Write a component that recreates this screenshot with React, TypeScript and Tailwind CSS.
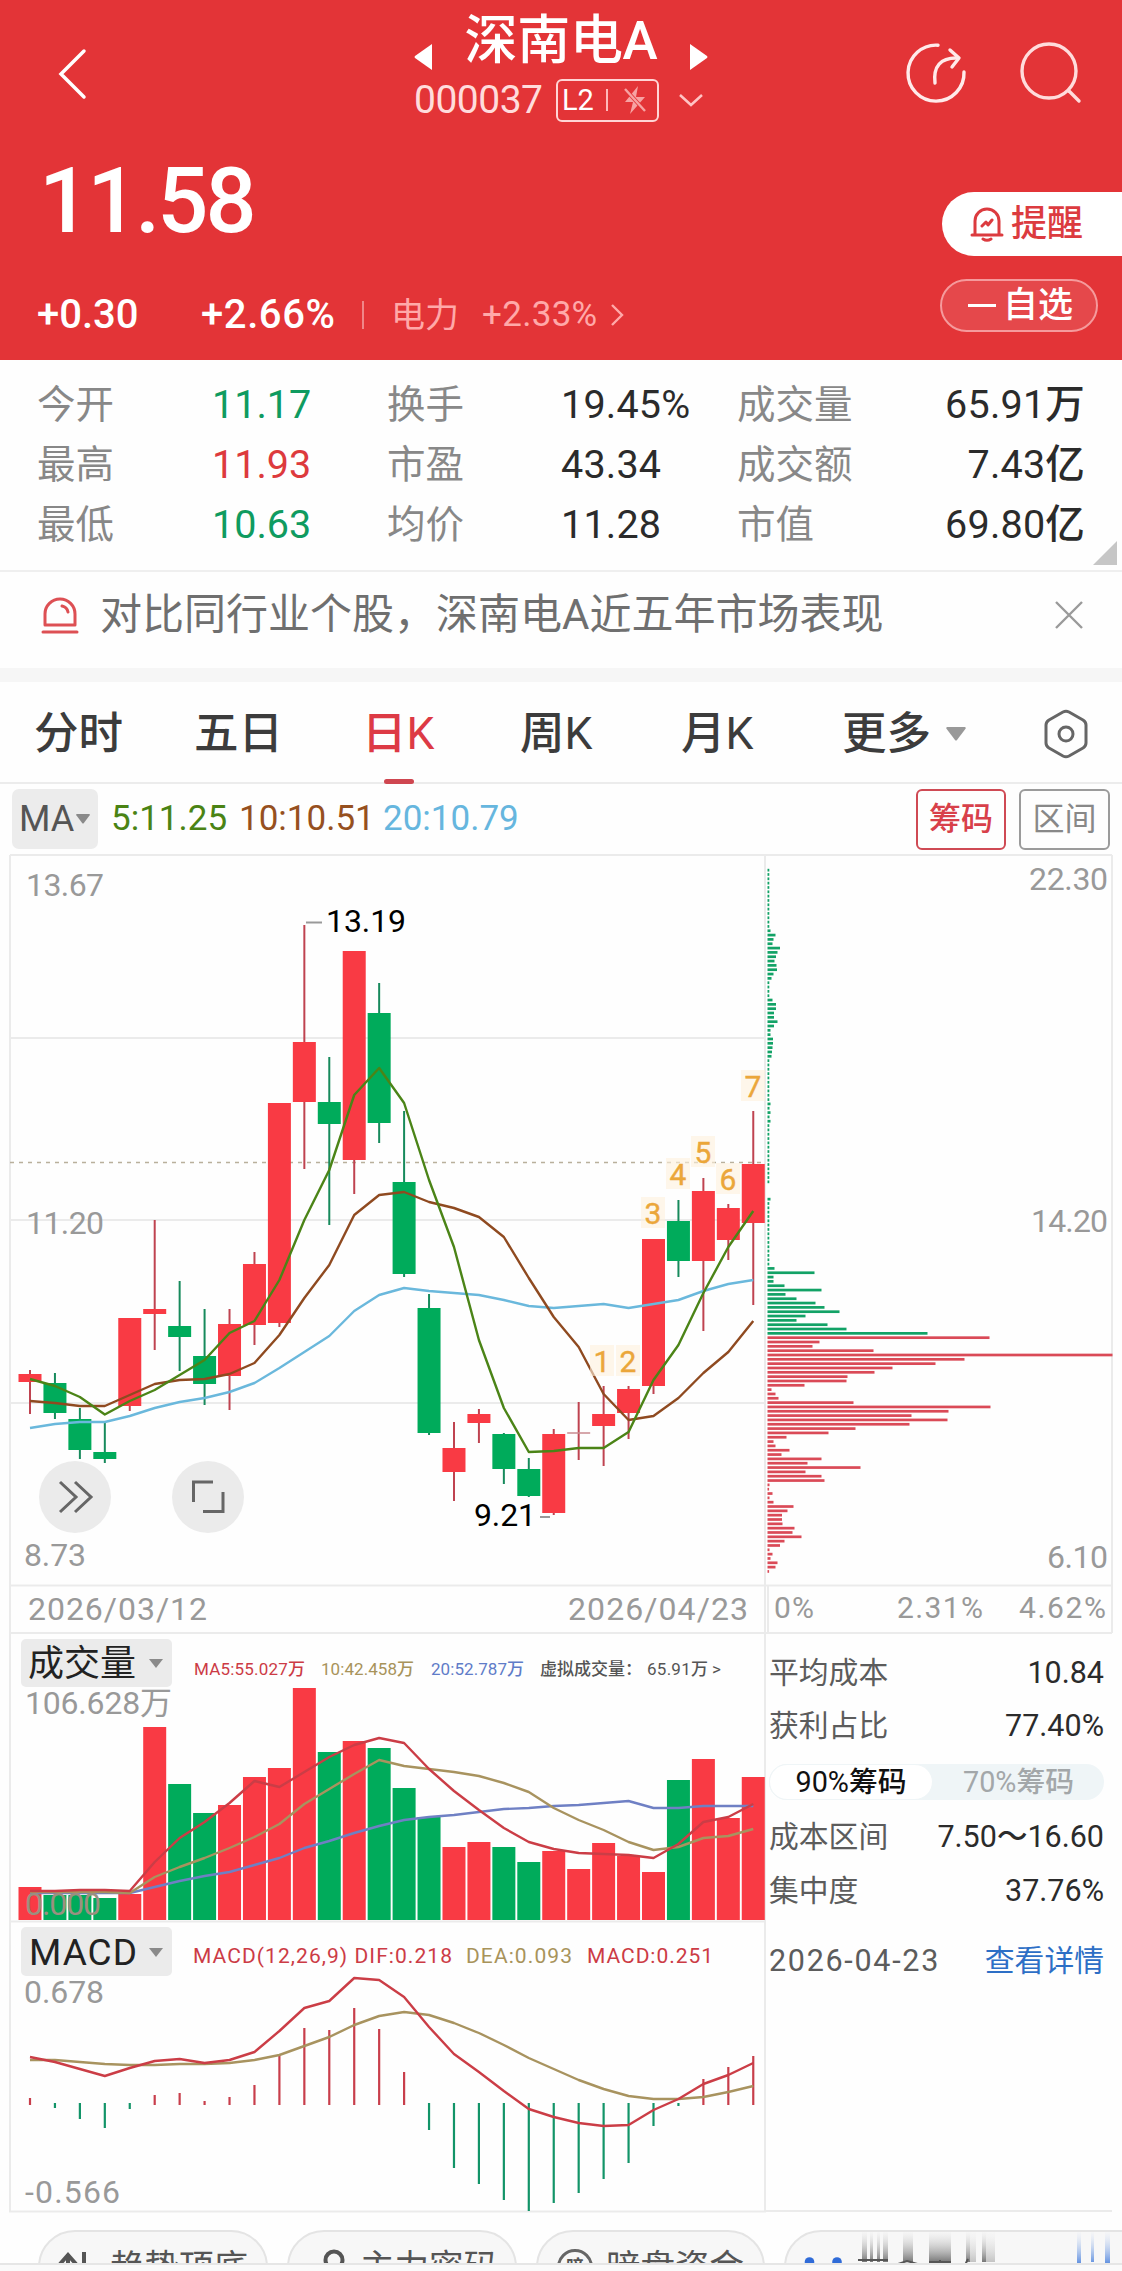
import React from "react";

const RED = "#f93a44";
const GREEN = "#00ab5b";
const STEP = 24.94;
const X0 = 30;
const cx = (i: number) => X0 + i * STEP;

// [kind, bodyTop, bodyBottom, wickTop, wickBottom]
const CANDLES: [string, number, number, number, number][] = [
  ["r", 1374, 1382, 1370, 1414],
  ["g", 1383, 1413, 1373, 1419],
  ["g", 1419, 1450, 1408, 1459],
  ["g", 1452, 1459, 1423, 1463],
  ["r", 1318, 1406, 1318, 1411],
  ["r", 1309, 1314, 1220, 1350],
  ["g", 1326, 1337, 1281, 1371],
  ["g", 1356, 1384, 1309, 1405],
  ["r", 1324, 1376, 1309, 1410],
  ["r", 1264, 1325, 1252, 1345],
  ["r", 1103, 1323, 1103, 1327],
  ["r", 1042, 1102, 925, 1169],
  ["g", 1102, 1124, 1057, 1225],
  ["r", 951, 1160, 951, 1194],
  ["g", 1013, 1123, 983, 1143],
  ["g", 1182, 1274, 1111, 1277],
  ["g", 1308, 1433, 1294, 1435],
  ["r", 1448, 1472, 1422, 1501],
  ["r", 1414, 1423, 1409, 1443],
  ["g", 1434, 1469, 1433, 1484],
  ["g", 1469, 1496, 1458, 1497],
  ["r", 1434, 1513, 1429, 1515],
  ["d", 1433, 1434, 1402, 1460],
  ["r", 1414, 1426, 1386, 1466],
  ["r", 1389, 1413, 1386, 1439],
  ["r", 1239, 1386, 1239, 1394],
  ["g", 1221, 1261, 1200, 1277],
  ["r", 1191, 1261, 1178, 1331],
  ["r", 1208, 1240, 1204, 1260],
  ["r", 1164, 1223, 1111, 1305],
];

const MA5 = [1379, 1386, 1397, 1414.5, 1401, 1390, 1375, 1360, 1333, 1321, 1280, 1220, 1170, 1095, 1068, 1103, 1180, 1247, 1340, 1408, 1452, 1451, 1448, 1448, 1432, 1380, 1345, 1293, 1247, 1211];
const MA10 = [1401, 1403, 1406, 1406, 1395, 1384, 1380, 1379, 1374, 1363, 1335, 1298, 1265, 1215, 1195, 1192, 1202, 1208, 1217, 1237, 1278, 1317, 1347, 1394, 1420, 1416, 1398, 1373, 1352, 1321];
const MA20 = [1428, 1424, 1422, 1422, 1416, 1408, 1402, 1398, 1392, 1383, 1368, 1352, 1336, 1311, 1295, 1288, 1291, 1293, 1295, 1300, 1306, 1308, 1306, 1304, 1308, 1304, 1300, 1291, 1284, 1280];

const VOLUME = [1887, 1895, 1895, 1898, 1894, 1727, 1784, 1813, 1805, 1777, 1768, 1688, 1752, 1741, 1748, 1788, 1817, 1847, 1842, 1847, 1862, 1851, 1869, 1843, 1856, 1872, 1780, 1759, 1818, 1777];
const V5 = [1891, 1891, 1890, 1890, 1891, 1862, 1838, 1822, 1803, 1781, 1787, 1772, 1757, 1745, 1738, 1743, 1769, 1791, 1810, 1828, 1842, 1849, 1853, 1854, 1855, 1858, 1844, 1822, 1817, 1804];
const V10 = [1892, 1892, 1892, 1892, 1893, 1877, 1867, 1858, 1848, 1837, 1824, 1804, 1789, 1774, 1760, 1766, 1769, 1772, 1776, 1783, 1792, 1808, 1820, 1830, 1842, 1850, 1847, 1838, 1836, 1829];
const V20 = [1893, 1893, 1893, 1893, 1893, 1887, 1881, 1876, 1872, 1865, 1858, 1848, 1841, 1833, 1826, 1820, 1817, 1815, 1812, 1809, 1808, 1806, 1805, 1803, 1801, 1808, 1808, 1806, 1806, 1806];

const MACD = [2098, 2108, 2119, 2128, 2109, 2095, 2093, 2101, 2097, 2085, 2054, 2028, 2030, 2008, 2029, 2072, 2130, 2168, 2184, 2200, 2211, 2203, 2193, 2179, 2163, 2126, 2106, 2079, 2067, 2056];
const DIF = [2057, 2062, 2069, 2076, 2068, 2061, 2059, 2063, 2060, 2052, 2031, 2008, 2001, 1978, 1980, 1997, 2027, 2054, 2072, 2091, 2109, 2117, 2123, 2126, 2125, 2110, 2099, 2084, 2075, 2063];
const DEA = [2060, 2060, 2062, 2064, 2065, 2065, 2064, 2064, 2063, 2060, 2055, 2046, 2037, 2025, 2016, 2012, 2015, 2023, 2033, 2045, 2058, 2069, 2080, 2089, 2096, 2099, 2099, 2097, 2092, 2086];

const tiny = (n: number) => Array<number>(n).fill(1.8);
// bar lengths of the cost distribution, from the highest price down
const CHIPS: number[] = [
  ...tiny(14), 3, 8, 6, 5, 12.5, 10, 8.5, 7, 9, 9.5, 6, 4, ...tiny(4),
  5, 8.5, 8.5, 6.5, 6.5, 10, 6.5, 3, 3, 5.5, 5.5, 5, 4.5, 4,
  ...tiny(10), 3, 2, 3, 2, 3, ...tiny(14), 0, 0, 0, 3, ...tiny(15),
  7, 47, 6, 6, 17, 54, 18, 29, 48, 57, 72, 38, 29, 60, 79, 160,
  222, 52, 45, 106, 345, 197, 168, 125, 107, 80, 79, 37, 4, 8, 11, 86, 223, 181, 144, 180, 142,
  88, 61, 19, 6, 8, 22, 14, 54, 40, 93, 38, 54, 57, 2, 1.6, 5, 2, 6, 26, 20, 14.5, 14.5, 15, 27,
  25, 34, 17, 12.5, 2, 5, 3, 10, 8, 1.6,
];

const MARKS: [string, number, number][] = [
  ["1", 602, 1361], ["2", 628, 1361], ["3", 653, 1213], ["4", 678, 1174],
  ["5", 703, 1152], ["6", 728, 1179], ["7", 753, 1086],
];

const Line = ({ data, color, width = 2.4 }: { data: number[]; color: string; width?: number }) => (
  <polyline
    points={data.map((y, i) => `${cx(i)},${y}`).join(" ")}
    fill="none"
    stroke={color}
    strokeWidth={width}
    strokeLinejoin="round"
  />
);

const Label = ({ x, y, w, size = 32, color = "#999", children }: { x: number; y: number; w: number; size?: number; color?: string; children: string }) => (
  <text x={x} y={y + size * 0.36 - 0.5} fontSize={size} fill={color} textLength={w} lengthAdjust="spacing">
    {children}
  </text>
);

const Caret = ({ className }: { className: string }) => (
  <svg viewBox="0 0 20 14" className={className} fill="currentColor">
    <path d="M1 0h18q1.200 .6.500 1.800L11 13q-1 1.200-2 0L.5 1.800Q-.2.600 1 0z" />
  </svg>
);

function Header() {
  return (
    <header className="h-[360px] bg-[#e33437] text-white">
      <div className="grid h-[136px] grid-cols-[1fr_294px_1fr]">
        <div className="pt-[47px] pl-[57px]">
          <svg viewBox="0 0 30 54" className="h-[54px] w-[30px]" fill="none" stroke="currentColor" strokeWidth="3.500" strokeLinecap="round">
            <path d="M27 4 4 27l23 23" />
          </svg>
        </div>
        <div>
          <div className="flex h-[78px] items-center justify-between">
            <svg viewBox="0 0 18 28" className="mt-[36px] h-[28px] w-[18px]" fill="currentColor">
              <path d="M18 1v26L1 15q-1-1 0-2z" />
            </svg>
            <h1 className="pt-[4px] text-[53px] leading-[78px] font-medium tracking-[-0.300px]">深南电A</h1>
            <svg viewBox="0 0 18 28" className="mt-[36px] h-[28px] w-[18px]" fill="currentColor">
              <path d="M0 1v26l17-12q1-1 0-2z" />
            </svg>
          </div>
          <div className="flex h-[44px] items-center">
            <span className="w-[142px] text-[39px] leading-[44px] tracking-[-0.500px] text-[#ffdcdc]">000037</span>
            <span className="flex h-[43px] w-[103px] items-center rounded-[6px] border-2 border-[#ffd5d5] pl-[4px]">
              <span className="w-[44px] text-[29px] leading-[40px]">L2</span>
              <span className="h-[22px] w-[2px] bg-[#ffb9b9]" />
              <svg viewBox="0 0 24 28" className="ml-[15px] h-[28px] w-[24px] text-[#f7a3a3]" fill="currentColor">
                <path d="M15 0 2 16h8L7 28 22 11h-9z" />
                <path d="M2 3 22 25" stroke="#e33437" strokeWidth="4" />
                <path d="M2 3 22 25" stroke="currentColor" strokeWidth="2.400" />
              </svg>
            </span>
            <svg viewBox="0 0 26 14" className="ml-[19px] h-[14px] w-[26px] text-[#ffc4c4]" fill="none" stroke="currentColor" strokeWidth="2.500">
              <path d="m2 2 11 10L24 2" />
            </svg>
          </div>
        </div>
        <div className="flex justify-end gap-[52px] pt-[41px] pr-[40px]">
          <svg viewBox="0 0 64 64" className="h-[64px] w-[64px]" fill="none" stroke="#ffeaea" strokeWidth="3.400" strokeLinecap="round" strokeLinejoin="round">
            <path d="M34 4.200A28 28 0 1 0 60 31" />
            <path d="M31 42c-2-17 6-25 21-25" />
            <path d="m46 9 9 8-7 9" />
          </svg>
          <svg viewBox="0 0 62 64" className="h-[64px] w-[62px]" fill="none" stroke="#ffdcdc" strokeWidth="3.400" strokeLinecap="round">
            <circle cx="29" cy="30" r="27" />
            <path d="m49 50 10 10" />
          </svg>
        </div>
      </div>
      <div className="flex h-[136px] items-start justify-between pl-[39px]">
        <div className="pt-[11px] text-[90px] leading-[110px] font-medium tracking-[-3px]">11.58</div>
        <button className="mt-[56px] flex h-[64px] w-[180px] items-center rounded-l-full bg-white pl-[28px] text-[#dc3b3f]">
          <svg viewBox="0 0 34 36" className="h-[36px] w-[34px]" fill="none" stroke="currentColor" strokeWidth="3" strokeLinecap="round" strokeLinejoin="round">
            <path d="M2 29h30M5 29V15a12 12 0 0 1 24 0v14M13 33q4 2.500 8 0M12 20l4-4 2 3 4-5" />
          </svg>
          <span className="ml-[7px] text-[36px] leading-[40px] font-medium">提醒</span>
        </button>
      </div>
      <div className="flex h-[88px] items-start justify-between pr-[24px] pl-[37px]">
        <div className="flex pt-[23px] text-[40px] leading-[40px] font-medium">
          <span className="w-[164px]">+0.30</span>
          <span className="w-[161px] tracking-[0.600px]">+2.66%</span>
          <span className="mt-[6px] mr-[27px] h-[28px] w-[2px] bg-[#f08688]" />
          <span className="w-[91px] text-[34px] font-normal text-[#ffa9a9]">电力</span>
          <span className="w-[128px] text-[35px] font-normal tracking-[0.300px] text-[#ffa9a9]">+2.33%</span>
          <svg viewBox="0 0 14 24" className="mt-[8px] h-[24px] w-[14px] text-[#ffa9a9]" fill="none" stroke="currentColor" strokeWidth="2.400">
            <path d="m2 2 10 10L2 22" />
          </svg>
        </div>
        <button className="mt-[7px] flex h-[53px] w-[158px] items-center rounded-full border-2 border-[#f59a9c] bg-[#e5484b] pl-[26px]">
          <span className="h-[3px] w-[28px] bg-white" />
          <span className="ml-[7px] text-[35px] leading-[46px] font-medium">自选</span>
        </button>
      </div>
    </header>
  );
}

const STATS = [
  ["今开", "11.17", "text-[#0f9b60]", "换手", "19.45%", "成交量", "65.91万"],
  ["最高", "11.93", "text-[#dd3a3d]", "市盈", "43.34", "成交额", "7.43亿"],
  ["最低", "10.63", "text-[#0f9b60]", "均价", "11.28", "市值", "69.80亿"],
];

function Stats() {
  return (
    <section className="relative h-[212px] border-b-2 border-[#efefef] pt-[15px] pr-[37px] pl-[37px]">
      {STATS.map((r) => (
        <div key={r[0]} className="grid h-[60px] grid-cols-[175px_175px_174px_176px_1fr_auto] items-center text-[38.500px] leading-[58px] text-[#2b2b2b]">
          <span className="text-[#888]">{r[0]}</span>
          <span className={`text-[39.500px] font-[450] ${r[2]}`}>{r[1]}</span>
          <span className="text-[#888]">{r[3]}</span>
          <span className="text-[39.500px] font-[450] tracking-[0.200px]">{r[4]}</span>
          <span className="text-[#888]">{r[5]}</span>
          <span className="text-[39.500px] font-[450] tracking-[0.200px]">{r[6]}</span>
        </div>
      ))}
      <svg viewBox="0 0 24 24" className="absolute right-[5px] bottom-[5px] h-[24px] w-[24px]" fill="#c6c6c6">
        <path d="M24 0v24H0z" />
      </svg>
    </section>
  );
}

function Banner() {
  return (
    <section className="flex h-[96px] items-center pr-[39px] pb-[11px] pl-[41px]">
      <svg viewBox="0 0 38 40" className="h-[40px] w-[38px]" fill="none" stroke="#dd5054" strokeWidth="3" strokeLinecap="round" strokeLinejoin="round">
        <path d="M4 30V19a15 15 0 0 1 30 0v11zM2 37h34M21 11q5 1 6 6" />
      </svg>
      <span className="ml-[21px] flex-1 text-[42px] leading-[60px] text-[#6f6f6f]">对比同行业个股，深南电A近五年市场表现</span>
      <svg viewBox="0 0 28 28" className="h-[28px] w-[28px]" stroke="#9a9a9a" strokeWidth="2.400">
        <path d="m1 1 26 26M27 1 1 27" />
      </svg>
    </section>
  );
}

function Tabs() {
  return (
    <nav className="relative flex h-[102px] items-center border-b-2 border-[#ececec] pt-[3px] pl-[34px] text-[44.500px] leading-[60px] font-[450] text-[#3c3c3c]">
      <span className="w-[160px]">分时</span>
      <span className="w-[168px]">五日</span>
      <span className="relative w-[158px] text-[#dd3a45]">
        日K
        <span className="absolute bottom-[-20px] left-[22px] h-[5px] w-[30px] rounded-full bg-[#cf4650]" />
      </span>
      <span className="w-[161px]">周K</span>
      <span className="w-[161px]">月K</span>
      <span>更多</span>
      <Caret className="ml-[14px] h-[14px] w-[22px] text-[#999]" />
      <svg viewBox="0 0 46 50" className="ml-[76px] h-[50px] w-[46px]" fill="none" stroke="#666" strokeWidth="3" strokeLinejoin="round">
        <path d="M20 3q3-1.500 6 0l14 8q3 2 3 5v18q0 3-3 5l-14 8q-3 1.500-6 0L6 39q-3-2-3-5V16q0-3 3-5z" />
        <circle cx="23" cy="25" r="7" />
      </svg>
    </nav>
  );
}

function MaBar() {
  return (
    <section className="flex h-[70px] items-center pr-[12px] pl-[12px] text-[35px] leading-[40px] font-[450]">
      <span className="flex h-[60px] w-[86px] items-center rounded-[7px] bg-[#ececec] pl-[7px] text-[36px] font-normal text-[#555]">
        MA
        <Caret className="ml-[2px] h-[10px] w-[14px] text-[#8a8a8a]" />
      </span>
      <span className="ml-[13px] w-[128px] text-[#4a8314]">5:11.25</span>
      <span className="w-[144px] text-[#96501f]">10:10.51</span>
      <span className="flex-1 text-[#66b6de]">20:10.79</span>
      <span className="flex h-[61px] w-[90px] items-center justify-center rounded-[6px] border-2 border-[#cf4a54] text-[32px] text-[#d8404a]">筹码</span>
      <span className="ml-[13px] flex h-[61px] w-[91px] items-center justify-center rounded-[6px] border-2 border-[#9b9b9b] text-[32px] font-normal text-[#888]">区间</span>
    </section>
  );
}

function PriceChart() {
  return (
    <svg viewBox="0 854 1122 780" className="block h-[780px] w-full">
      <g stroke="#ebebeb" strokeWidth="2" fill="none">
        <path d="M10 855H1112M10 1585.500H1112M10 1633H1112M10 1038H765M10 1220H765M10 1403H765M10 855V1634M765 855V1634M1112 855V1633M768 1585V1633" />
      </g>
      <path d="M10 1162.500H765" stroke="#b9b09c" strokeWidth="1.600" strokeDasharray="4 5" />
      <Label x={26} y={885} w={78}>13.67</Label>
      <Label x={26} y={1223} w={78}>11.20</Label>
      <Label x={24} y={1555} w={62}>8.73</Label>
      <Label x={28} y={1609} w={179}>2026/03/12</Label>
      <Label x={568} y={1609} w={180}>2026/04/23</Label>
      {CANDLES.map(([k, t, b, h, l], i) => {
        const wick = k === "g" ? "#178a5c" : "#bf4350";
        return (
          <g key={i}>
            <path d={`M${cx(i)} ${h}V${l}`} stroke={wick} strokeWidth="2" />
            {k === "d" ? (
              <path d={`M${cx(i) - 11.500} ${t}h23`} stroke="#c98a8f" strokeWidth="1.500" />
            ) : (
              <rect x={cx(i) - 11.500} y={t} width="23" height={b - t} fill={k === "g" ? GREEN : RED} />
            )}
          </g>
        );
      })}
      <Line data={MA20} color="#6ab8dc" />
      <Line data={MA10} color="#8f4a20" />
      <Line data={MA5} color="#4b8417" />
      {MARKS.map(([n, x, y]) => (
        <g key={n}>
          <rect x={x - 12} y={y - 16} width="24" height="31" fill="#fdf0dc" fillOpacity="0.600" />
          <text x={x} y={y + 10.5} fontSize="30" textAnchor="middle" fill="#eba63a" stroke="#eba63a" strokeWidth="0.400">{n}</text>
        </g>
      ))}
      <path d="M306 922.500h16M540 1517h10" stroke="#999" strokeWidth="2" />
      <Label x={326} y={921} w={80} color="#000">13.19</Label>
      <Label x={474} y={1515} w={62} color="#000">9.21</Label>
      <circle cx="75" cy="1497" r="36" fill="#ebebeb" />
      <circle cx="208" cy="1497" r="36" fill="#ebebeb" />
      <g fill="none" stroke="#666" strokeWidth="3">
        <path d="m60 1482 16 15-16 15M75 1482l16 15-16 15M193.500 1502v-20H213M203 1511.500h20V1492" />
      </g>
      {CHIPS.map((w, k) =>
        w > 0 ? <rect key={k} x="767.500" y={868.8 + k * 4.329} width={w} height="2.700" fill={k < 108 ? "#12a266" : "#da4a57"} /> : null,
      )}
      <Label x={1029} y={879} w={79}>22.30</Label>
      <Label x={1031} y={1221} w={77}>14.20</Label>
      <Label x={1047} y={1557} w={61}>6.10</Label>
      <Label x={774} y={1608} w={40} size={30}>0%</Label>
      <Label x={897} y={1608} w={86} size={30}>2.31%</Label>
      <Label x={1019} y={1608} w={87} size={30}>4.62%</Label>
    </svg>
  );
}

function IndicatorCharts() {
  return (
    <svg viewBox="0 1634 766 579" className="block h-[579px] w-[766px]">
      <path d="M10 1634V2211.500H766M765 1634V2212M10 1921.500H765" stroke="#ebebeb" strokeWidth="2" fill="none" />
      <rect x="21" y="1639" width="151" height="48" rx="5" fill="#ebebeb" />
      <text x="28" y="1676" fontSize="36" fill="#222">成交量</text>
      <g fontWeight="450">
        <Label x={194} y={1669} w={111} size={17} color="#cc3b45">MA5:55.027万</Label>
        <Label x={321} y={1669} w={93} size={17} color="#a8935a">10:42.458万</Label>
        <Label x={431} y={1669} w={93} size={17} color="#5f7cc8">20:52.787万</Label>
        <Label x={540} y={1669} w={102} size={17} color="#555">虚拟成交量：</Label>
        <Label x={647} y={1669} w={61} size={17} color="#555">65.91万</Label>
        <Label x={712} y={1669} w={10} size={17} color="#555">&gt;</Label>
      </g>
      <path d="M149 1659h14l-7 9z" fill="#8a8a8a" />
      <Label x={25} y={1703} w={147}>106.628万</Label>
      {VOLUME.map((y, i) => (
        <rect key={i} x={cx(i) - 11.500} y={y} width="23" height={1920 - y} fill={CANDLES[i][0] === "g" ? GREEN : RED} />
      ))}
      <Line data={V20} color="#6f80c4" />
      <Line data={V10} color="#a8935f" />
      <Line data={V5} color="#cb3d46" />
      <Label x={25} y={1904} w={76} color="#9a9080">0.000</Label>

      <rect x="21" y="1927" width="151" height="49" rx="5" fill="#ebebeb" />
      <Label x={29} y={1952} w={108} size={37} color="#222">MACD</Label>
      <path d="M149 1948h14l-7 9z" fill="#8a8a8a" />
      <g fontWeight="450">
        <Label x={193} y={1956} w={259} size={21} color="#cc3b45">MACD(12,26,9) DIF:0.218</Label>
        <Label x={466} y={1956} w={106} size={21} color="#a8935a">DEA:0.093</Label>
        <Label x={587} y={1956} w={126} size={21} color="#cc3b45">MACD:0.251</Label>
      </g>
      <Label x={24} y={1992} w={80}>0.678</Label>
      <Label x={25} y={2192} w={95}>-0.566</Label>
      {MACD.map((y, i) => (
        <path key={i} d={`M${cx(i)} ${y > 2104 ? 2103 : 2105}V${y}`} stroke={y > 2104 ? "#129468" : "#c83e4b"} strokeWidth="2.200" />
      ))}
      <Line data={DEA} color="#a8935f" />
      <Line data={DIF} color="#cb3d46" />
    </svg>
  );
}

const Row = ({ k, v, className }: { k: string; v: string; className: string }) => (
  <div className={`flex items-center justify-between ${className}`}>
    <span className="text-[#5c5c5c]">{k}</span>
    <span className="text-[30.500px] font-[450] text-[#2b2b2b]">{v}</span>
  </div>
);

function CostPanel() {
  return (
    <aside className="mr-[10px] h-[578px] flex-1 border-b-2 border-[#ebebeb] pr-[8px] pl-[3px] text-[29.800px] leading-[40px]">
      <Row k="平均成本" v="10.84" className="mt-[19px] h-[40px]" />
      <Row k="获利占比" v="77.40%" className="mt-[13px] h-[40px]" />
      <div className="mt-[18px] flex h-[36px] rounded-full bg-[#eff5f7] text-[28.800px] font-[450]">
        <span className="flex w-[164px] items-center justify-center rounded-full border border-[#eff5f7] bg-white text-[#111]">90%筹码</span>
        <span className="flex flex-1 items-center justify-center text-[#a3a7a9]">70%筹码</span>
      </div>
      <Row k="成本区间" v="7.50～16.60" className="mt-[17px] h-[40px]" />
      <Row k="集中度" v="37.76%" className="mt-[14px] h-[40px]" />
      <div className="mt-[30px] flex h-[40px] items-center justify-between">
        <span className="text-[30.500px] tracking-[1.700px] text-[#5c5c5c]">2026-04-23</span>
        <span className="text-[#2d6fc6]">查看详情</span>
      </div>
    </aside>
  );
}

const pill = "flex h-[74px] shrink-0 items-center rounded-full border-2 border-[#e4e4e4] bg-[#f7f7f7] text-[34.500px] leading-[40px] text-[#555]";

function Shortcuts() {
  return (
    <section className="h-[58px] overflow-hidden">
      <div className="flex h-[52px] gap-[19px] overflow-hidden border-b-2 border-[#e6e6e6] pt-[17px] pl-[38px]">
        <div className={`${pill} w-[230px] pl-[17px]`}>
          <svg viewBox="0 0 34 34" className="h-[34px] w-[34px]" fill="none" stroke="#555" strokeWidth="4">
            <path d="M11 34V4M3 14l8-9 8 9M27 2v30M27 32l7-8" />
          </svg>
          <span className="ml-[19px]">趋势顶底</span>
        </div>
        <div className={`${pill} w-[230px] pl-[33px]`}>
          <svg viewBox="0 0 24 36" className="h-[38px] w-[24px]" fill="none" stroke="#555" strokeWidth="4">
            <circle cx="12" cy="11" r="8.500" />
            <path d="M12 20v16M12 28h8" />
          </svg>
          <span className="ml-[14px]">主力密码</span>
        </div>
        <div className={`${pill} w-[229px] pl-[19px]`}>
          <span className="flex h-[36px] w-[36px] items-center justify-center rounded-full border-[3px] border-[#666] text-[18px] font-bold">暗</span>
          <span className="ml-[13px]">暗盘资金</span>
        </div>
        <div className={`${pill} w-[360px] rounded-r-none`}>
          <svg viewBox="787 2231 335 70" className="h-[70px] w-[335px] shrink-0">
            <defs>
              <linearGradient id="fade" x1="0" y1="0" x2="0" y2="1">
                <stop offset="0" stopColor="#f7f7f7" stopOpacity="0.200" />
                <stop offset="1" stopColor="#777" />
              </linearGradient>
              <linearGradient id="fadeBlue" x1="0" y1="0" x2="0" y2="1">
                <stop offset="0" stopColor="#f7f7f7" stopOpacity="0.200" />
                <stop offset="1" stopColor="#5b8de0" />
              </linearGradient>
            </defs>
            <circle cx="810.500" cy="2261" r="4.800" fill="#2f6bd8" />
            <circle cx="838" cy="2261" r="4.800" fill="#2f6bd8" />
            <g fill="url(#fade)">
              <path d="M863 2229h5v32h-5zM871 2229h3v32h-3zM878 2229h3v32h-3zM884 2229h5v32h-5zM904 2229h10v32h-10zM930 2229h22v32h-22zM967 2229h4v32h-4zM983 2229h4v32h-4z" />
              <path d="M971 2229h6v32h-6zM987 2229h9v32h-9z" opacity="0.400" />
            </g>
            <path d="M859 2259h30M896 2264l12-4 14 4M930 2261h22M941 2259v6M966 2264l3-6M980 2264h16" stroke="#555" strokeWidth="2" fill="none" />
            <path d="M1078 2229h4v34h-4zM1092 2229h3v32h-3zM1106 2229h5v34h-5z" fill="url(#fadeBlue)" />
          </svg>
        </div>
      </div>
      <div className="h-[6px] bg-[#fafafa]" />
    </section>
  );
}

export default function App() {
  return (
    <main className="h-[2271px] w-[1122px] overflow-hidden bg-[#fefefe] font-[Roboto,'Noto_Sans_CJK_SC',sans-serif]">
      <Header />
      <Stats />
      <Banner />
      <div className="h-[14px] bg-[#f6f6f6]" />
      <Tabs />
      <MaBar />
      <PriceChart />
      <div className="flex">
        <IndicatorCharts />
        <CostPanel />
      </div>
      <Shortcuts />
    </main>
  );
}
